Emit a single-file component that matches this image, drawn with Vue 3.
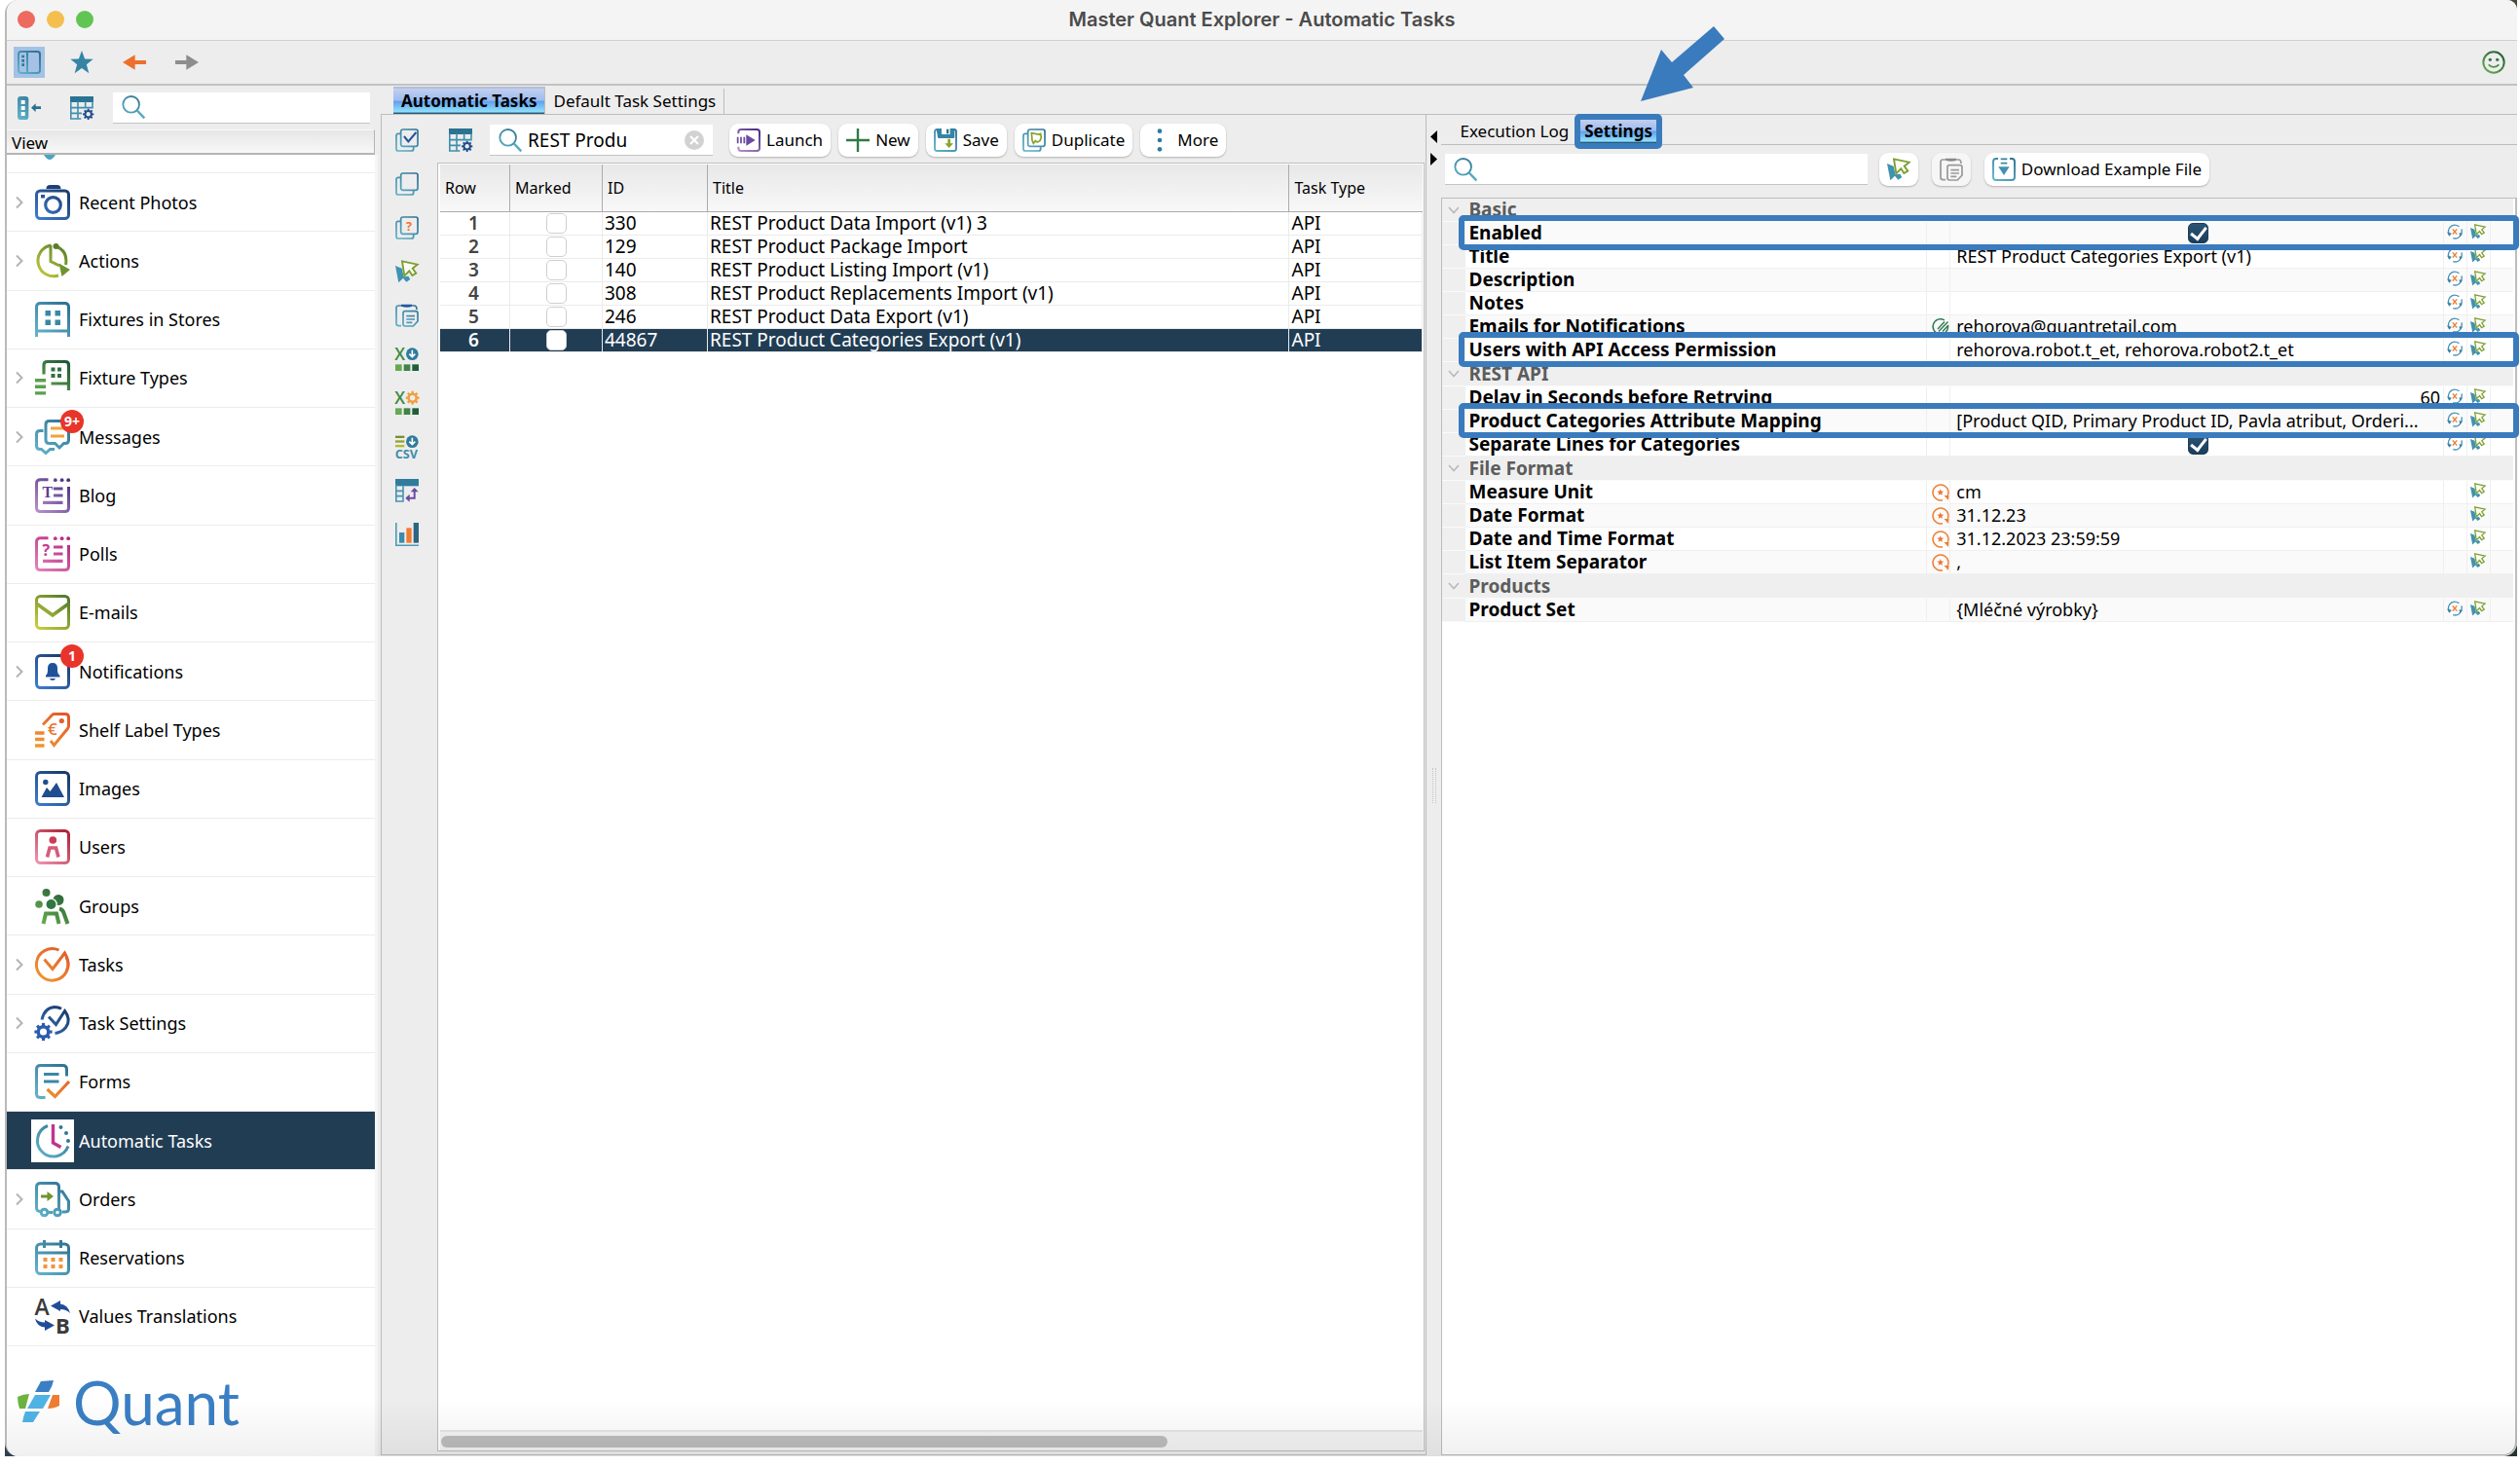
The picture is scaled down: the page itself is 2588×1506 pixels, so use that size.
<template>
  <div class="desktop">
    <div class="window">
      <!-- Shared gradients for all icons -->
      <svg class="defs" width="0" height="0" aria-hidden="true">
        <defs>
          <linearGradient
            v-for="g in gradients"
            :id="g.id"
            :key="g.id"
            gradientUnits="userSpaceOnUse"
            x1="34"
            y1="0"
            x2="4"
            y2="36"
          >
            <stop offset="0" :stop-color="g.from" />
            <stop offset="1" :stop-color="g.to" />
          </linearGradient>
        </defs>
      </svg>

      <header class="titlebar">
        <div class="lights">
          <button class="light red" aria-label="Close"></button>
          <button class="light yellow" aria-label="Minimize"></button>
          <button class="light green" aria-label="Zoom"></button>
        </div>
        <h1>Master Quant Explorer - Automatic Tasks</h1>
      </header>

      <div class="app-toolbar">
        <button
          v-for="t in appTools"
          :key="t.icon"
          class="app-tool"
          :class="{ active: t.active }"
          :aria-label="t.label"
        >
          <svg class="icon" viewBox="0 0 36 36" v-html="icons[t.icon]"></svg>
        </button>
        <button class="app-tool smiley" aria-label="Feedback">
          <svg class="icon" viewBox="0 0 36 36" v-html="icons.smile"></svg>
        </button>
      </div>

      <div class="content">
        <!-- Sidebar -->
        <aside class="sidebar">
          <div class="side-tools">
            <button class="tool" aria-label="Collapse">
              <svg class="icon" viewBox="0 0 36 36" v-html="icons.collapse"></svg>
            </button>
            <button class="tool" aria-label="Columns">
              <svg class="icon" viewBox="0 0 36 36" v-html="icons.columns"></svg>
            </button>
            <label class="search">
              <svg class="icon" viewBox="0 0 36 36" v-html="icons.search"></svg>
              <input v-model="sideQuery" type="text" aria-label="Search views" />
            </label>
          </div>
          <div class="view-header">View</div>
          <nav class="tree">
            <div class="tree-cut">
              <svg class="cut-icon" viewBox="0 0 12 5">
                <path d="M0 0h12q-3 5-6 5T0 0z" fill="#4aa3c3" />
              </svg>
            </div>
            <a
              v-for="item in views"
              :key="item.label"
              href="#"
              class="tree-item"
              :class="{ selected: item.selected }"
            >
              <svg class="chevron" viewBox="0 0 8 14">
                <path v-if="item.open" d="M1 1.500 6.500 7 1 12.500" fill="none" stroke="#b4b4b4" stroke-width="2" />
              </svg>
              <span class="tree-icon">
                <svg viewBox="0 0 36 36" v-html="icons[item.icon]"></svg>
                <span v-if="item.badge" class="badge">{{ item.badge }}</span>
              </span>
              <span>{{ item.label }}</span>
            </a>
          </nav>
          <div class="logo">
            <svg class="logo-mark" viewBox="0 0 43 43">
              <path d="M24 1 37 0q-1 6-5 12H18z" fill="#3a7ec4" />
              <path d="M0 17q6-3 12-3L8 29H2q-2-6-2-12z" fill="#6cb33f" />
              <path d="M18 15h16l-8 14H10z" fill="#4fb3e6" />
              <path d="M36 15h7v11q-5 3-12 3z" fill="#ee7d31" />
              <path d="M8 32h15l-7 11H5q1-6 3-11z" fill="#4fb3e6" />
            </svg>
            <span>Quant</span>
          </div>
        </aside>

        <main class="workspace">
          <div class="main-tabs" role="tablist">
            <button class="tab active" role="tab" aria-selected="true">Automatic Tasks</button>
            <button class="tab" role="tab" aria-selected="false">Default Task Settings</button>
          </div>

          <div class="panes">
            <!-- Task list -->
            <section class="tasks">
              <div class="rail">
                <button v-for="r in rail" :key="r.icon" class="tool" :aria-label="r.label">
                  <svg class="icon" viewBox="0 0 36 36" v-html="icons[r.icon]"></svg>
                </button>
              </div>
              <div class="list">
                <div class="list-tools">
                  <button class="tool" aria-label="Columns">
                    <svg class="icon" viewBox="0 0 36 36" v-html="icons.columns"></svg>
                  </button>
                  <label class="search list-search">
                    <svg class="icon" viewBox="0 0 36 36" v-html="icons.search"></svg>
                    <input v-model="taskQuery" type="text" aria-label="Search tasks" />
                    <button class="clear" aria-label="Clear" @click="taskQuery = ''">
                      <svg viewBox="0 0 20 20">
                        <circle cx="10" cy="10" r="10" fill="#d2d2d2" />
                        <path d="m6 6 8 8m0-8-8 8" stroke="#fff" stroke-width="2" />
                      </svg>
                    </button>
                  </label>
                  <div class="actions">
                    <button v-for="a in actions" :key="a.label" class="push">
                      <svg class="icon" viewBox="0 0 36 36" v-html="icons[a.icon]"></svg>
                      {{ a.label }}
                    </button>
                  </div>
                </div>

                <div class="grid-box">
                  <table class="grid">
                    <thead>
                      <tr>
                        <th class="col-row">Row</th>
                        <th class="col-marked">Marked</th>
                        <th class="col-id">ID</th>
                        <th>Title</th>
                        <th class="col-type">Task Type</th>
                      </tr>
                    </thead>
                    <tbody>
                      <tr v-for="(task, i) in tasks" :key="task.id" :class="{ selected: task.id === selectedId }">
                        <td class="num">{{ i + 1 }}</td>
                        <td class="mark">
                          <input v-model="task.marked" type="checkbox" :aria-label="'Mark ' + task.title" />
                        </td>
                        <td>{{ task.id }}</td>
                        <td>{{ task.title }}</td>
                        <td>API</td>
                      </tr>
                    </tbody>
                  </table>
                  <div class="scroll-track"><div class="scroll-thumb"></div></div>
                </div>
              </div>
            </section>

            <div class="splitter">
              <svg viewBox="0 0 8 36">
                <path d="M7 0v13L0 6.500zM0 23v13l7-6.500z" fill="#000" />
              </svg>
              <div class="grip"></div>
            </div>

            <!-- Task settings -->
            <section class="details">
              <div class="detail-tabs" role="tablist">
                <button class="tab" role="tab" aria-selected="false">Execution Log</button>
                <div class="tab-mark">
                  <button class="tab active" role="tab" aria-selected="true">Settings</button>
                  <svg class="pointer" viewBox="0 0 86 78">
                    <path d="M0 77 21 24 32 37 75 0 86 13 44 50 54 63z" fill="#3a7bbd" />
                  </svg>
                </div>
              </div>
              <div class="detail-tools">
                <label class="search">
                  <svg class="icon" viewBox="0 0 36 36" v-html="icons.search"></svg>
                  <input v-model="propQuery" type="text" aria-label="Search settings" />
                </label>
                <button class="push" aria-label="Pick">
                  <svg class="icon" viewBox="0 0 36 36" v-html="icons.cursor"></svg>
                </button>
                <button class="push" aria-label="Paste" disabled>
                  <svg class="icon" viewBox="0 0 36 36" v-html="icons.pasteGray"></svg>
                </button>
                <button class="push">
                  <svg class="icon" viewBox="0 0 36 36" v-html="icons.download"></svg>
                  Download Example File
                </button>
              </div>

              <div class="props-box">
                <table class="props">
                  <colgroup>
                    <col class="c-gutter" />
                    <col class="c-name" />
                    <col class="c-icon" />
                    <col class="c-value" />
                    <col class="c-icon" />
                    <col class="c-icon" />
                    <col class="c-icon" />
                  </colgroup>
                  <tbody v-for="group in groups" :key="group.name">
                    <tr class="group">
                      <td>
                        <svg class="caret" viewBox="0 0 12 8">
                          <path d="m1 1 5 5.500L11 1" fill="none" stroke="#b9b9b9" stroke-width="1.600" />
                        </svg>
                      </td>
                      <th colspan="6">{{ group.name }}</th>
                    </tr>
                    <tr v-for="p in group.props" :key="p.name" :class="{ marked: p.marked, odd: p.odd }">
                      <td class="gutter"></td>
                      <th>{{ p.name }}</th>
                      <td class="ico flag">
                        <svg v-if="p.flag" viewBox="0 0 36 36" v-html="icons[p.flag]"></svg>
                      </td>
                      <td class="value" :class="p.type">
                        <input v-if="p.type === 'check'" v-model="p.value" type="checkbox" :aria-label="p.name" />
                        <template v-else>{{ p.value }}</template>
                      </td>
                      <td class="ico">
                        <button v-if="p.reset" :aria-label="'Reset ' + p.name">
                          <svg viewBox="0 0 36 36" v-html="icons.reset"></svg>
                        </button>
                      </td>
                      <td class="ico">
                        <button :aria-label="'Pick ' + p.name">
                          <svg viewBox="0 0 36 36" v-html="icons.cursor"></svg>
                        </button>
                      </td>
                      <td class="ico"></td>
                    </tr>
                  </tbody>
                </table>
              </div>
            </section>
          </div>
        </main>
      </div>
    </div>
  </div>
</template>

<script setup>
import { ref } from 'vue'

const sideQuery = ref('')
const taskQuery = ref('REST Produ')
const propQuery = ref('')
const selectedId = ref(44867)

const gradients = [
  { id: 'teal', from: '#2b6f90', to: '#62b3ca' },
  { id: 'navy', from: '#17355f', to: '#3b7bd0' },
  { id: 'green', from: '#1c5535', to: '#6db251' },
  { id: 'olive', from: '#4c762c', to: '#c8cf3c' },
  { id: 'purple', from: '#442b80', to: '#b88fc9' },
  { id: 'magenta', from: '#b41f7b', to: '#e183bc' },
  { id: 'orange', from: '#e0552b', to: '#f09a30' },
  { id: 'red', from: '#ae1c30', to: '#ee94ae' }
]

const frame = c => `<rect x="1.500" y="1.500" width="33" height="33" rx="4" fill="none" stroke="url(#${c})" stroke-width="3"/>`
const noteFrame = c => `<g fill="none" stroke="url(#${c})" stroke-width="3"><path d="M13.500 1.800H5.500q-4 0-4 4V30.500q0 4 4 4H30.500q4 0 4-4V9"/><path d="M19 11H28.500M19 18H28.500M8 25.300H28.500" stroke-width="3.200"/></g><g fill="url(#${c})"><circle cx="20.800" cy="2.200" r="1.900"/><circle cx="27.600" cy="2.200" r="1.900"/><circle cx="34.200" cy="2.200" r="1.900"/></g>`
const gear = (x, y, r, c) => {
  let teeth = ''
  for (let a = 0; a < 360; a += 45) {
    teeth += `<rect x="${x - r * 0.22}" y="${y - r * 1.3}" width="${r * 0.44}" height="${r * 0.5}" transform="rotate(${a} ${x} ${y})"/>`
  }
  return `<g fill="${c}">${teeth}</g><circle cx="${x}" cy="${y}" r="${r * 0.75}" fill="none" stroke="${c}" stroke-width="${r * 0.48}"/>`
}
const pages = '<g fill="none" stroke="url(#teal)" stroke-width="2.600"><rect x="8.500" y="1.500" width="26" height="26" rx="3"/><path d="M8 8H4.500q-3 0-3 3V31.500q0 3 3 3H25q3 0 3-3V28"/></g>'
const paste = c => `<g fill="none" stroke="${c}" stroke-width="2.600"><path d="M10 3H5q-3.500 0-3.500 3.500V30.500q0 3.500 3.500 3.500H9M26 3h3q4 0 4 6"/><path d="M12 14.500q0-3 3-3H31q3.500 0 3.500 3.500V27l-7 7.500H15q-3 0-3-3z"/><path d="M17 19H30M17 24H30M17 29H26"/></g>`
const excel = '<text x="-1" y="19" font-family="Open Sans, sans-serif" font-weight="600" font-size="26" fill="#3d8a43">X</text><path d="M0 26h10v10H0z" fill="#66a94f"/><path d="M13 26h10v10H13z" fill="#3f8347"/><path d="M26 26h10v10H26z" fill="#1f5f38"/>'
const downDot = '<circle cx="26" cy="10" r="9.500" fill="#2f7c9d"/><path d="M26 4v10m-4.500-4L26 14.500l4.500-4.500" fill="none" stroke="#fff" stroke-width="2.500"/>'

const icons = {
  panel: '<g fill="none" stroke="url(#teal)" stroke-width="3"><rect x="1.500" y="1.500" width="33" height="33" rx="4"/><path d="M15 2v32"/></g><g fill="#2f7796"><path d="M6.500 7h4v4h-4zM6.500 13.500h4v4h-4zM6.500 20h4v4h-4z"/></g>',
  star: '<path d="M18 0l4.600 12.800L35.500 13 25.300 21.200 29 35 18 27 7 35l3.700-13.800L.5 13l12.900-.2z" fill="#3584a5"/>',
  back: '<path d="M0 18 19 6.500V15H36v6H19v8.500z" fill="#ed6f2c"/>',
  forward: '<path d="M36 18 17 6.500V15H0v6h17v8.500z" fill="#8d8d8d"/>',
  smile: '<g fill="none" stroke="url(#green)" stroke-width="3"><circle cx="18" cy="18" r="16"/><path d="M10 21.500q8 8 16 0" stroke-width="2.500"/></g><circle cx="12.500" cy="14" r="2.500" fill="#35734a"/><circle cx="23.500" cy="14" r="2.500" fill="#35734a"/>',
  collapse: '<rect x="0" y="0" width="17" height="36" rx="5" fill="url(#teal)"/><path d="M5.500 6h6v6h-6zM5.500 15h6v6h-6zM5.500 24h6v6h-6z" fill="#fff"/><path d="M21 17.500 28 11v4.500h8v4h-8V24z" fill="#2b6f90"/>',
  columns: '<path d="M0 0h36v9H0z" fill="#2b7393"/><path d="M1.200 8v26.500H17M0 17.500H34.500V8M0 26H18M12 8v27M23.500 8v9" fill="none" stroke="#3f8fae" stroke-width="2.400"/>' + gear(28, 27.5, 6.5, '#1f4d8f'),
  search: '<circle cx="14.500" cy="14" r="12.500" fill="none" stroke="url(#teal)" stroke-width="2.800"/><path d="M23.500 23 35 35" stroke="#5aa9c2" stroke-width="3.600"/>',
  photo: '<rect x="1.500" y="6" width="33" height="28.500" rx="4" fill="none" stroke="url(#navy)" stroke-width="3"/><path d="M11.500 4q0-4 4-4h7q4 0 4 4z" fill="#1d4078"/><circle cx="18.500" cy="20.500" r="7.800" fill="none" stroke="url(#navy)" stroke-width="3.200"/><path d="M6 10h4v3.500H6z" fill="#2a5699"/>',
  actions: '<g fill="none" stroke="url(#olive)" stroke-width="3"><path d="M16.500 2A16 16 0 1 0 24 33M16 2V18.500L25 23"/><path d="M21.500 3Q34 8 31.500 22"/></g><circle cx="21.500" cy="3" r="3" fill="#557d2d"/><path d="M24.500 20.500 36 27 27.500 34z" fill="#6f942f"/>',
  fixtures: '<path d="M1.500 36V5.500q0-4 4-4H30.500q4 0 4 4V36M1.500 30H34.500" fill="none" stroke="url(#teal)" stroke-width="3"/><path d="M10.500 9H16v5.500h-5.500zM20.500 9H26v5.500h-5.500zM10.500 18.500H16V24h-5.500zM20.500 18.500H26V24h-5.500z" fill="#3a87a6"/>',
  fixtureTypes: '<path d="M9 14.500V5q0-3.500 3.500-3.500H31q3.500 0 3.500 3.500V31M16.500 24H34" fill="none" stroke="url(#green)" stroke-width="3.200"/><path d="M16.500 7.500h4v4h-4zM23 7.500h4v4h-4zM16.500 14h4v4h-4zM23 14h4v4h-4z" fill="#2f7240"/><path d="M0 19h11v3.400H0zM0 25.600h11V29H0zM0 32.200h11v3.400H0z" fill="#5aa14c"/>',
  messages: '<g fill="none" stroke="url(#teal)" stroke-width="3"><path d="M14.500 1.500H31q3.500 0 3.500 3.500V21q0 3.500-3.500 3.500H29.500L25 29l-4.500-4.500H14.500Q11 24.500 11 21V5q0-3.500 3.500-3.500z"/><path d="M8.500 11.500H5q-3.500 0-3.500 3.500V27q0 3.500 3.500 3.500H6.500L11 34.500l4.500-4H20"/></g><path d="M16 9H30M16 17H30" stroke="#f0a23c" stroke-width="3"/>',
  blog: noteFrame('purple') + '<text x="7.500" y="19.500" font-family="Liberation Serif, serif" font-weight="700" font-size="16" fill="#5a3f95">T</text>',
  polls: noteFrame('magenta') + '<text x="7.500" y="20" font-family="Open Sans, sans-serif" font-weight="700" font-size="16" fill="#c7378d">?</text>',
  emails: frame('olive') + '<path d="M2 9.500 18 21 34 9.500" fill="none" stroke="url(#olive)" stroke-width="3.600"/>',
  notifications: frame('navy') + '<path d="M11 22q2-1.500 2-5v-2.500q0-5.500 5-5.500t5 5.500V17q0 3.500 2.500 5v1.500H11z" fill="#1f5199"/><path d="M15 25h6q-.5 2-3 2t-3-2z" fill="#1f5199"/>',
  labels: '<g fill="none" stroke="url(#orange)" stroke-width="3"><path d="M8 12.500 17.500 2.500Q18.500 1.500 20 1.500H31q3.500 0 3.500 3.500V13.500Q34.500 15 33.500 16.500L19.500 33.500 16 29"/><path d="M0 21H9.500M0 27.500H9.500M0 34H9.500" stroke-width="3.400"/></g><circle cx="27.300" cy="8.500" r="2.600" fill="#e0622c"/><text x="13" y="23" font-family="Open Sans, sans-serif" font-weight="600" font-size="17" fill="#e8742c">€</text>',
  images: frame('navy') + '<path d="M6.500 27 12 17l3.500 4L22 12l8 15z" fill="#1f4d8f"/><circle cx="10.800" cy="11.500" r="2.700" fill="#1f4d8f"/>',
  users: frame('red') + '<circle cx="18.300" cy="11" r="3.800" fill="#cc3c56"/><path d="M12.500 28.500 15 19H21.500L24 28.500" fill="none" stroke="#d55c78" stroke-width="3.600"/>',
  groups: '<g fill="url(#green)"><circle cx="11.500" cy="4" r="4"/><circle cx="4" cy="16" r="3.800"/><circle cx="24" cy="11.500" r="5.500"/></g><circle cx="16.500" cy="16" r="6.300" fill="#fff"/><circle cx="16.500" cy="16" r="5" fill="#2f7742"/><g fill="none" stroke="url(#green)" stroke-width="4"><path d="M8.500 36 11 25.500H22L24.500 36"/><path d="M25 20.500q4 1 5 6L33.500 36"/></g>',
  tasks: '<path d="M24.500 3A16.300 16.300 0 1 0 32 10" fill="none" stroke="url(#orange)" stroke-width="3"/><path d="M9.500 12.500 18 22.500 30.500 6q6 10 2 18" fill="none" stroke="url(#orange)" stroke-width="3"/>',
  taskSettings: '<g fill="none" stroke="url(#navy)" stroke-width="3"><path d="M7 14.500Q9.500 2.500 20 1.500q4 0 7 1.700"/><path d="M14 11.500 21.500 19.500 30.500 5.500q7 9 1 17-4 5-11 6"/></g>' + gear(8.5, 27, 7, '#2b5cad'),
  forms: '<path d="M10.500 34.500H5.500q-4 0-4-4V5.500q0-4 4-4H28.500q4 0 4 4V12.500" fill="none" stroke="url(#teal)" stroke-width="3"/><path d="M9 10.500H24.500M9 18H24.500" stroke="#3a87a6" stroke-width="3"/><path d="M12.500 26 20.500 33.500 35 18" fill="none" stroke="url(#orange)" stroke-width="3.200"/>',
  automatic: '<path d="M13 2.500A16.300 16.300 0 1 0 34 23.500" fill="none" stroke="url(#teal)" stroke-width="3"/><path d="M18.500 1V20L26.500 24.500" fill="none" stroke="#c2348f" stroke-width="3.400"/><g fill="#2f7796"><circle cx="26.500" cy="4" r="2"/><circle cx="32" cy="10" r="2"/><circle cx="34" cy="18" r="2"/></g>',
  orders: '<g fill="none" stroke="url(#teal)" stroke-width="3"><path d="M6 30.500q-4.500 0-4.500-3.500V5.500q0-4 4-4H20.500q4 0 4 4V28M13 31.500H18M24.500 10H28L34.500 20V28q0 3-4 3H28"/><circle cx="9.500" cy="31.500" r="3.300"/><circle cx="23" cy="31.500" r="3.300"/></g><path d="M6 13.500h6.500V10l6.500 5-6.500 5v-3.500H6z" fill="#6f942f"/>',
  reservations: '<g fill="none" stroke="url(#teal)" stroke-width="3"><rect x="1.500" y="4" width="33" height="30.500" rx="4"/><path d="M2 13H34M9.500 0V8M26.500 0V8"/></g><path d="M8.500 18h4v4h-4zM16.500 18h4v4h-4zM24.500 18h4v4h-4zM8.500 25h4v4h-4zM16.500 25h4v4h-4zM24.500 25h4v4h-4z" fill="#f0953c"/>',
  translations: '<text x="-.5" y="16.500" font-family="Open Sans, sans-serif" font-weight="600" font-size="23" fill="#3b3b3b">A</text><text x="21" y="36" font-family="Open Sans, sans-serif" font-weight="700" font-size="22" fill="#3b3b3b">B</text><path d="M16 7.500 26 2v3.500q8 1 10 9.500-4-4-10-4V13zM20 27.500 10 33v-3.500Q2 29 0 20.500q4 4 10 4V22z" fill="#1f4d9a"/>',
  checkAll: pages + '<path d="M13.500 12 20 20 32 6" fill="none" stroke="#24519c" stroke-width="3"/>',
  uncheckAll: pages,
  invert: pages + '<text x="16.500" y="22" font-family="Open Sans, sans-serif" font-weight="700" font-size="19" fill="#ee7432">?</text>',
  cursor: '<path d="M0 9 10 13 13 26l7-1 3 5-6 4-5-6-7 7z" fill="#3f93b0"/><path d="M10.500 2 34 7l-7.500 6 5.500 7.500-6 3.500-4.500-7-7.500 7.500z" fill="#fbfdf4" stroke="#7d9e32" stroke-width="2.800"/>',
  paste: paste('url(#teal)') + '<path d="M9 1h17v3q-8 3-17 0z" fill="#2456a3"/>',
  pasteGray: paste('#9a9a9a') + '<path d="M9 1h17v3q-8 3-17 0z" fill="#8a8a8a"/>',
  excelDown: excel + downDot,
  excelGear: excel + gear(26.5, 10, 8, '#f0a03c'),
  csv: '<path d="M0 1h14v3.500H0z" fill="#7a8f2c"/><path d="M0 8h14v3.500H0z" fill="#95a52c"/><path d="M0 15h14v3.500H0z" fill="#b3b92f"/>' + downDot + '<text x="-.5" y="36" font-family="Open Sans, sans-serif" font-weight="700" font-size="19" fill="#3d8dab">CSV</text>',
  pivot: '<path d="M0 0h36v11H0z" fill="#2f7c9d"/><path d="M1.200 8V34.500H12V11M0 18.500H12M0 26.500H12" fill="none" stroke="#4494b2" stroke-width="2.400"/><path d="M29.500 18V29.500H20" fill="none" stroke="#6a4aa3" stroke-width="3"/><path d="M23.500 20 29.500 13.500 35.500 20zM22 23.500 15.500 29.500 22 35.500z" fill="#6a4aa3"/>',
  chart: '<path d="M1.200 0V34.800H36" fill="none" stroke="#4a9cb8" stroke-width="2.400"/><path d="M6 15h8v16H6z" fill="#3a8cab"/><path d="M17 8h8v23h-8z" fill="#f07c30"/><path d="M28 0h8v31h-8z" fill="#2f6480"/>',
  launch: '<path d="M2 8V5.500Q2 1.500 6 1.500H30.500q4 0 4 4V30.500q0 4-4 4H6q-4 0-4-4V28" fill="none" stroke="url(#purple)" stroke-width="3"/><path d="M1 13v10M6 13v10M11 13v10" stroke="#6a4aa3" stroke-width="2.600"/><path d="M14 9.500 28 18 14 26.500z" fill="#6a4aa3"/>',
  add: '<path d="M18 0v36M0 18h36" stroke="#2f7a45" stroke-width="3.600"/>',
  save: '<path d="M1.500 5q0-3.500 3.500-3.500H31q3.500 0 3.500 3.500V31q0 3.500-3.500 3.500H5q-3.500 0-3.500-3.500z" fill="none" stroke="url(#teal)" stroke-width="2.800"/><path d="M4 1H32V13q0 2-2 2H8q-2 0-2-2z" fill="#3584a5"/><path d="M12 0h13v9H12z" fill="#fff"/><path d="M19.500 1h3.500v7h-3.500z" fill="#2b6f90"/><path d="M21.500 16h4v7h4.500l-6.500 7-6.500-7h4.500z" fill="#8aa32c"/>',
  duplicate: pages + '<path d="M14 7 25 9l3-1 1 6-2 5-4 2-3-2-3 4-2-5z" fill="#fff" stroke="#8aa32c" stroke-width="2.600"/>',
  more: '<g fill="#2f7c9d"><circle cx="18" cy="4" r="3.500"/><circle cx="18" cy="18" r="3.500"/><circle cx="18" cy="32" r="3.500"/></g>',
  download: '<path d="M9 1.500H6q-4.500 0-4.500 4.500V30q0 4.500 4.500 4.500H30q4.500 0 4.500-4.500V6q0-4.500-4.500-4.500H27M13 2H23M13 8.500H23" fill="none" stroke="url(#teal)" stroke-width="2.800"/><path d="M9.500 14H26.500L18 27z" fill="#3f93b0"/>',
  reset: '<g fill="none" stroke="#4394b8" stroke-width="3"><path d="M28 6Q14-2 6 9q-6 9 1 18"/><path d="M34 12q2 13-8 20-6 3-12 1"/></g><path d="m0 19 5 9 6-6zM36 22l-8-1 2 8z" fill="#3584a5"/><path d="m13 12 10 12m0-12L13 24" stroke="#ee7d31" stroke-width="3.200"/>',
  shared: '<g fill="none" stroke="#2f7a50" stroke-width="2.800"><path d="M26 4A15.500 15.500 0 1 0 33 15"/><path d="M14 27 33 7M12 22 26 7M22 27 34 14"/></g>',
  inherited: '<path d="M22 33.500A16 16 0 1 1 33.500 14q1 6-1 10" fill="none" stroke="#ee7d31" stroke-width="3"/><path d="M25 24h10l-1 10z" fill="#ee7d31"/><path d="m17.500 10.500 1.900 4.600 5 .4-3.800 3.200 1.200 4.900-4.300-2.700-4.300 2.700 1.200-4.900-3.800-3.200 5-.4z" fill="#ee7432"/>'
}

const appTools = [
  { icon: 'panel', label: 'Toggle sidebar', active: true },
  { icon: 'star', label: 'Favorites' },
  { icon: 'back', label: 'Back' },
  { icon: 'forward', label: 'Forward' }
]

const views = [
  { label: 'Recent Photos', icon: 'photo', open: true },
  { label: 'Actions', icon: 'actions', open: true },
  { label: 'Fixtures in Stores', icon: 'fixtures' },
  { label: 'Fixture Types', icon: 'fixtureTypes', open: true },
  { label: 'Messages', icon: 'messages', open: true, badge: '9+' },
  { label: 'Blog', icon: 'blog' },
  { label: 'Polls', icon: 'polls' },
  { label: 'E-mails', icon: 'emails' },
  { label: 'Notifications', icon: 'notifications', open: true, badge: '1' },
  { label: 'Shelf Label Types', icon: 'labels' },
  { label: 'Images', icon: 'images' },
  { label: 'Users', icon: 'users' },
  { label: 'Groups', icon: 'groups' },
  { label: 'Tasks', icon: 'tasks', open: true },
  { label: 'Task Settings', icon: 'taskSettings', open: true },
  { label: 'Forms', icon: 'forms' },
  { label: 'Automatic Tasks', icon: 'automatic', selected: true },
  { label: 'Orders', icon: 'orders', open: true },
  { label: 'Reservations', icon: 'reservations' },
  { label: 'Values Translations', icon: 'translations' }
]

const rail = [
  { icon: 'checkAll', label: 'Mark all' },
  { icon: 'uncheckAll', label: 'Unmark all' },
  { icon: 'invert', label: 'Marked only' },
  { icon: 'cursor', label: 'Pick' },
  { icon: 'paste', label: 'Paste' },
  { icon: 'excelDown', label: 'Export to Excel' },
  { icon: 'excelGear', label: 'Excel settings' },
  { icon: 'csv', label: 'Export to CSV' },
  { icon: 'pivot', label: 'Pivot' },
  { icon: 'chart', label: 'Chart' }
]

const actions = [
  { icon: 'launch', label: 'Launch' },
  { icon: 'add', label: 'New' },
  { icon: 'save', label: 'Save' },
  { icon: 'duplicate', label: 'Duplicate' },
  { icon: 'more', label: 'More' }
]

const tasks = ref([
  { id: 330, title: 'REST Product Data Import (v1) 3', marked: false },
  { id: 129, title: 'REST Product Package Import', marked: false },
  { id: 140, title: 'REST Product Listing Import (v1)', marked: false },
  { id: 308, title: 'REST Product Replacements Import (v1)', marked: false },
  { id: 246, title: 'REST Product Data Export (v1)', marked: false },
  { id: 44867, title: 'REST Product Categories Export (v1)', marked: false }
])

const groups = ref([
  {
    name: 'Basic',
    props: [
      { name: 'Enabled', type: 'check', value: true, reset: true, marked: true, odd: true },
      { name: 'Title', value: 'REST Product Categories Export (v1)', reset: true },
      { name: 'Description', value: '', reset: true, odd: true },
      { name: 'Notes', value: '', reset: true },
      { name: 'Emails for Notifications', value: 'rehorova@quantretail.com', flag: 'shared', reset: true, odd: true },
      { name: 'Users with API Access Permission', value: 'rehorova.robot.t_et, rehorova.robot2.t_et', reset: true, marked: true }
    ]
  },
  {
    name: 'REST API',
    props: [
      { name: 'Delay in Seconds before Retrying', type: 'number', value: 60, reset: true },
      { name: 'Product Categories Attribute Mapping', value: '[Product QID, Primary Product ID, Pavla atribut, Orderi...', reset: true, marked: true, odd: true },
      { name: 'Separate Lines for Categories', type: 'check', value: true, reset: true }
    ]
  },
  {
    name: 'File Format',
    props: [
      { name: 'Measure Unit', value: 'cm', flag: 'inherited' },
      { name: 'Date Format', value: '31.12.23', flag: 'inherited', odd: true },
      { name: 'Date and Time Format', value: '31.12.2023 23:59:59', flag: 'inherited' },
      { name: 'List Item Separator', value: ',', flag: 'inherited', odd: true }
    ]
  },
  {
    name: 'Products',
    props: [
      { name: 'Product Set', value: '{Mléčné výrobky}', reset: true, odd: true }
    ]
  }
])
</script>

<style>
body {
  margin: 0;
  background: #fff;
}
</style>

<style scoped>
* {
  box-sizing: border-box;
}

.desktop {
  height: 100vh;
  padding: 0 3px 10px 5px;
  overflow: hidden;
  font-family: "Noto Sans", "Open Sans", sans-serif;
  font-size: 18px;
  line-height: 24px;
  color: #000;
  background:
    linear-gradient(#2e4152, #2e4152) 5px calc(100% - 10px) / 16px 16px no-repeat,
    linear-gradient(#22352e, #22352e) calc(100% - 3px) calc(100% - 10px) / 16px 16px no-repeat,
    linear-gradient(#4a4a3c, #4a4a3c) calc(100% - 3px) 0 / 12px 12px no-repeat,
    #fff;
}

.window {
  position: relative;
  display: flex;
  flex-direction: column;
  height: 100%;
  background: #ededed;
  border-left: 2px solid #b9b9b9;
  border-radius: 14px 10px 14px 14px;
}

/* soft shade along the bottom edge */
.window::after {
  content: "";
  position: absolute;
  inset: auto 0 0 0;
  height: 60px;
  border-radius: 0 0 14px 12px;
  background: linear-gradient(rgba(0, 0, 0, 0), rgba(0, 0, 0, 0.06));
  pointer-events: none;
}

.defs {
  position: absolute;
}

button,
input {
  margin: 0;
  font: inherit;
  color: inherit;
}

button {
  padding: 0;
  border: 0;
  background: none;
}

svg {
  display: block;
  overflow: visible;
}

.icon {
  flex: none;
  width: 24px;
  height: 24px;
}

/* Title bar */
.titlebar {
  display: grid;
  grid-template-columns: 1fr auto 1fr;
  align-items: center;
  height: 42px;
  padding-bottom: 2px;
  background: #f4f4f4;
  border-bottom: 1px solid #d0d0d0;
  border-radius: 12px 10px 0 0;
}

.titlebar h1 {
  margin: 0;
  font-family: Inter, sans-serif;
  font-size: 20px;
  font-weight: 600;
  color: #4b4b4b;
}

.lights {
  display: flex;
  gap: 12px;
  padding-left: 11px;
}

.light {
  width: 18px;
  height: 18px;
  border-radius: 50%;
}

.light.red { background: #ec6a5e; }
.light.yellow { background: #f4bf4f; }
.light.green { background: #61c554; }

.app-toolbar {
  display: flex;
  align-items: center;
  gap: 22px;
  height: 46px;
  padding: 0 8px 0 7px;
  border-bottom: 2px solid #c2c2c2;
}

.app-tool {
  display: grid;
  place-items: center;
  width: 32px;
  height: 32px;
}

.app-tool.active {
  background: #a5c1e6;
}

.smiley {
  margin-left: auto;
}

/* Sidebar */
.content {
  display: flex;
  flex: 1;
  min-height: 0;
}

.sidebar {
  display: flex;
  flex-direction: column;
  flex: none;
  width: 381px;
  margin-right: 3px;
}

.side-tools {
  display: flex;
  align-items: center;
  height: 45px;
  padding: 0 8px 0 11px;
  gap: 30px;
}

.search {
  display: flex;
  align-items: center;
  flex: 1;
  gap: 6px;
  min-width: 0;
  height: 32px;
  padding: 0 9px;
  background: #fff;
  border-bottom: 1px solid #c4c4c4;
}

.side-tools .search {
  margin-left: -10px;
}

.search input {
  flex: 1;
  min-width: 0;
  padding: 0;
  border: 0;
  outline: 0;
  background: none;
  font-size: 19px;
}

.view-header {
  height: 26px;
  padding-left: 5px;
  margin-right: 3px;
  font-size: 17px;
  line-height: 25px;
  background: linear-gradient(#e6e6e6, #f8f8f8);
  border: solid #b5b5b5;
  border-width: 0 1px 2px 0;
  border-top: 1px solid #f9f9f9;
}

.tree {
  display: flex;
  flex-direction: column;
  flex: 1;
  min-height: 0;
  background: #fff;
  border-right: 3px solid #f5f5f5;
}

.tree-cut {
  flex: none;
  height: 19px;
  padding-left: 38px;
  border-bottom: 1px solid #ececec;
}

.cut-icon {
  width: 12px;
  height: 5px;
}

.tree-item {
  display: flex;
  align-items: center;
  flex: 1;
  padding-left: 9px;
  color: #000;
  text-decoration: none;
  border-bottom: 1px solid #ececec;
}

.tree-item.selected {
  color: #fff;
  background: #213d54;
}

.chevron {
  width: 8px;
  height: 14px;
}

.tree-icon {
  position: relative;
  padding: 4px;
  margin: 0 5px 0 8px;
}

.tree-icon svg {
  width: 36px;
  height: 36px;
}

.selected .tree-icon {
  background: #fff;
}

.badge {
  position: absolute;
  top: -6px;
  right: -10px;
  width: 24px;
  height: 24px;
  font-size: 14px;
  font-weight: 700;
  line-height: 24px;
  text-align: center;
  color: #fff;
  background: #e8342a;
  border-radius: 50%;
}

.logo {
  display: flex;
  align-items: center;
  flex: none;
  gap: 14px;
  height: 113px;
  padding: 0 0 0 11px;
  font-family: Lato, sans-serif;
  font-size: 62px;
  line-height: 62px;
  color: #3a7fc4;
  background: #fff;
  border-right: 3px solid #f5f5f5;
  border-radius: 0 0 0 12px;
}

.logo-mark {
  width: 43px;
  height: 43px;
}

/* Workspace */
.workspace {
  display: flex;
  flex-direction: column;
  flex: 1;
  min-width: 0;
  padding-bottom: 1px;
}

.main-tabs {
  display: flex;
  align-items: flex-end;
  height: 30px;
  padding-left: 13px;
  border-bottom: 1px solid #bdbdbd;
}

.tab {
  padding: 0 8px;
  font-size: 17px;
  line-height: 26px;
}

.main-tabs .tab {
  border-right: 1px solid #bdbdbd;
}

.tab.active {
  font-weight: 700;
  background: linear-gradient(#c3cfee 0%, #9dbdf0 45%, #63a2ee 52%, #8fe0fb 92%, #2b5878 97%);
}

.main-tabs .tab.active {
  border-top: 2px solid #b3bfd6;
}

.panes {
  display: grid;
  grid-template-columns: minmax(0, 1074fr) 15px minmax(0, 1104fr);
  flex: 1;
  min-height: 0;
}

.tasks {
  display: flex;
  min-height: 0;
  border: 1px solid #bdbdbd;
  border-top: 0;
}

.rail {
  display: flex;
  flex-direction: column;
  gap: 21px;
  width: 57px;
  padding: 14px 0 0 14px;
}

.list {
  display: flex;
  flex-direction: column;
  flex: 1;
  min-width: 0;
  padding: 0 1px 3px 0;
}

.list-tools {
  display: flex;
  align-items: center;
  height: 49px;
  padding: 3px 0 0 12px;
}

.list-search {
  flex: none;
  width: 229px;
  margin: 0 17px 0 18px;
}

.clear {
  width: 20px;
  height: 20px;
}

.actions {
  display: flex;
  gap: 8px;
}

.push {
  display: flex;
  align-items: center;
  gap: 6px;
  height: 34px;
  padding: 0 8px;
  font-size: 17px;
  white-space: nowrap;
  background: #fff;
  border-radius: 9px;
  box-shadow: 0 1px 2px rgba(0, 0, 0, 0.25);
}

.push:disabled {
  background: #f6f6f6;
}

.grid-box {
  display: flex;
  flex-direction: column;
  flex: 1;
  padding: 1px 1px 0 2px;
  background: #fff;
  border: 1px solid #bdbdbd;
}

.grid {
  width: 100%;
  table-layout: fixed;
  border-spacing: 0;
}

.grid th {
  height: 49px;
  padding: 0 0 0 5px;
  font-size: 16px;
  font-weight: 400;
  text-align: left;
  background: linear-gradient(#e8e8e8, #f8f8f8);
  border-right: 1px solid #ababab;
  border-bottom: 1px solid #ababab;
}

.grid th:last-child {
  border-right: 0;
}

.col-row { width: 72px; }
.col-marked { width: 95px; }
.col-id { width: 108px; }
.col-type { width: 137px; }

.grid td {
  height: 24px;
  padding: 0 0 0 2px;
  font-size: 19px;
  line-height: 23px;
  white-space: nowrap;
  border-right: 1px solid #ebebeb;
  border-bottom: 1px solid #ebebeb;
}

.grid .num {
  padding-right: 4px;
  font-weight: 600;
  text-align: center;
  color: #444;
}

.grid .mark {
  padding: 0;
}

.grid .selected td {
  color: #fff;
  background: #213d54;
}

.grid .selected .num {
  color: #fff;
}

input[type="checkbox"] {
  display: grid;
  place-items: center;
  width: 21px;
  height: 21px;
  margin: 0 auto;
  appearance: none;
  background: #fff;
  border: 1px solid #cfcfcf;
  border-radius: 5px;
}

input[type="checkbox"]:checked {
  background: linear-gradient(#2b5575, #1b3d5a);
  border-color: #1b3d5a;
}

input[type="checkbox"]:checked::before {
  content: "";
  width: 7px;
  height: 13px;
  margin-bottom: 3px;
  border: solid #fff;
  border-width: 0 3px 3px 0;
  transform: rotate(38deg);
}

.scroll-track {
  height: 21px;
  padding: 4px 1px;
  margin-top: auto;
  background: #f3f3f3;
  border-top: 2px solid #e4e4e4;
}

.scroll-thumb {
  width: 74%;
  height: 12px;
  background: #bcbcbc;
  border-radius: 6px;
}

.splitter {
  display: flex;
  flex-direction: column;
  align-items: center;
  padding: 16px 0 52px;
}

.splitter svg {
  width: 8px;
  height: 36px;
}

.grip {
  width: 4px;
  height: 36px;
  margin: auto;
  border: dotted #c4c4c4;
  border-width: 0 1px;
}

/* Details */
.details {
  display: flex;
  flex-direction: column;
  min-width: 0;
}

.detail-tabs {
  display: flex;
  align-items: center;
  height: 31px;
  padding: 4px 0 0 11px;
  border-bottom: 1px solid #bdbdbd;
}

.detail-tabs .tab {
  height: 24px;
  line-height: 24px;
}

.tab-mark {
  position: relative;
  margin-left: -2px;
  border: 6px solid #3a7bbd;
  border-radius: 5px;
}

.tab-mark .tab {
  display: block;
  padding: 0 4px;
}

.pointer {
  position: absolute;
  right: -70px;
  bottom: 42px;
  width: 86px;
  height: 78px;
}

.detail-tools {
  display: flex;
  align-items: center;
  gap: 14px;
  height: 54px;
  padding: 0 316px 4px 4px;
}

.detail-tools .search {
  margin-right: -2px;
}

.props-box {
  flex: 1;
  padding-right: 2px;
  background: #fff;
  border: 2px solid #bdbdbd;
  border-width: 1px 2px 1px 1px;
  border-radius: 0 0 14px 0;
}

.props {
  width: 100%;
  table-layout: fixed;
  border-spacing: 0;
}

.c-gutter { width: 24px; }
.c-name { width: 43%; }
.c-icon { width: 24px; }

.props th,
.props td {
  height: 24px;
  padding: 0 3px;
  line-height: 23px;
  text-align: left;
  white-space: nowrap;
  border-bottom: 1px solid #f0f0f0;
}

.props th {
  font-size: 19px;
}

.props .odd th,
.props .odd td {
  background: #fafafa;
}

.props .group th,
.props .group td,
.props tr .gutter {
  background: #efefef;
  border-bottom-color: #fafafa;
}

.props .group th {
  color: #5c5c5c;
}

.props .group td {
  padding: 0 6px;
}

.props tbody + tbody .group th {
  height: 25px;
}

.caret {
  width: 12px;
  height: 8px;
}

.props .value,
.props .ico {
  border-left: 1px solid #efefef;
}

.props .value {
  padding-left: 6px;
}

.props .ico svg {
  width: 16px;
  height: 16px;
}

.props .flag {
  padding: 0 0 0 5px;
}

.props .flag svg {
  width: 18px;
  height: 18px;
}

.props .number {
  text-align: right;
}

/* callout frame round a whole row */
.marked {
  position: relative;
}

.marked .gutter::before {
  content: "";
  position: absolute;
  inset: -7px -6px -5px 17px;
  z-index: 1;
  border: 6px solid #3a7bbd;
  border-radius: 5px;
  pointer-events: none;
}
</style>
